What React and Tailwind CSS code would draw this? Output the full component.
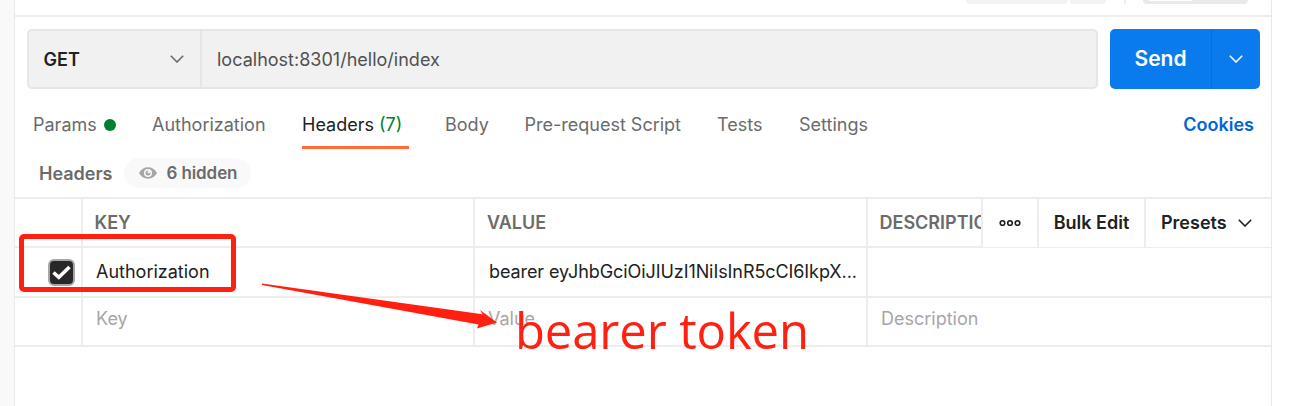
import React from "react";

const tabs = [
  { name: "Params", dot: true, width: "w-[119px]" },
  { name: "Authorization", width: "w-[150px]" },
  { name: "Headers", count: 7, active: true, width: "w-[143px]" },
  { name: "Body", width: "w-[79.5px]" },
  { name: "Pre-request Script", width: "w-[192.5px]" },
  { name: "Tests", width: "w-[82px]" },
  { name: "Settings", width: "w-[90px]" },
];

const Chevron = ({ className }) => (
  <svg className={className} width="14" height="8" viewBox="0 0 14 8" fill="none" stroke="currentColor" strokeWidth="1.6">
    <path d="M0.8 0.8 L7 7 L13.2 0.8" />
  </svg>
);

const Eye = () => (
  <svg width="18" height="12" viewBox="0 0 18 12">
    <path d="M0 6C2 2.200 5.200 0.300 9 0.300S16 2.200 18 6c-2 3.800-5.200 5.700-9 5.700S2 9.800 0 6z" fill="#a6a6a6" />
    <circle cx="9" cy="6" r="4" fill="#f9f9f9" />
    <circle cx="9" cy="6" r="2.500" fill="#a6a6a6" />
    <circle cx="9.900" cy="5" r="1.300" fill="#f9f9f9" />
  </svg>
);

const TopBar = () => (
  <div className="h-[17px] border-b-2 border-[#ededed] flex items-start">
    <div className="ml-[951px] w-[102px] h-1 rounded-b-[5px] bg-[#f2f2f2]" />
    <div className="ml-0.5 w-9 h-1 rounded-br-[5px] bg-[#f2f2f2]" />
    <div className="ml-[18px] w-0.5 h-1 bg-[#ededed]" />
    <div className="ml-[17px] w-[105px] h-1 rounded-b-[5px] bg-[#e9e9e9] pl-1.5">
      <div className="w-[43px] h-px bg-white" />
    </div>
  </div>
);

const RequestBar = () => (
  <div className="flex mt-3 ml-3 h-[60px]">
    <div className="flex w-[1071px] border-2 border-[#e6e6e6] rounded-[5px] bg-[#f1f1f1] text-lg">
      <div className="flex items-center justify-between w-[173px] border-r-2 border-[#e6e6e6] pl-[14.5px] pr-4 font-semibold text-[#212121]">
        <span className="pt-0.5">GET</span>
        <Chevron className="text-[#6b6b6b]" />
      </div>
      <div className="flex items-center pl-[15px] pt-0.5 tracking-[0.01px] text-[#505050]">localhost:8301/hello/index</div>
    </div>
    <div className="flex ml-3 w-[150px] rounded-[5px] bg-[#097bed] text-white">
      <div className="flex items-center justify-center w-[102px] border-r border-[#086fd6] text-[21px] font-semibold">
        Send
      </div>
      <div className="flex flex-1 items-center justify-center">
        <Chevron />
      </div>
    </div>
  </div>
);

const TabBar = () => (
  <div className="flex h-[60px] pl-[18px] pr-[17px] text-lg leading-[71px] text-[#6b6b6b] whitespace-nowrap">
    {tabs.map(tab => (
      <div key={tab.name} className={tab.width}>
        {tab.active ? (
          <div className="w-[107px] h-[60px] border-b-[3px] border-[#ff6c37] text-[#212121]">
            {tab.name} <span className="text-[#007f31]">({tab.count})</span>
          </div>
        ) : (
          <div className="flex items-center h-[71px]">
            {tab.name}
            {tab.dot && <span className="ml-[7px] mt-px w-3 h-3 rounded-full bg-[#007f31]" />}
          </div>
        )}
      </div>
    ))}
    <div className="ml-auto font-semibold text-[#0265d2]">Cookies</div>
  </div>
);

const HeadersTitle = () => (
  <div className="flex items-center h-12 pl-6 text-lg font-semibold text-[#6b6b6b]">
    <span className="w-[85px] pt-0.5">Headers</span>
    <div className="flex items-center w-[127px] h-[30px] pl-[15px] rounded-full bg-[#f9f9f9] text-[17px] tracking-[-0.1px]">
      <Eye />
      <span className="ml-[9.5px]">6 hidden</span>
    </div>
  </div>
);

const HeaderTable = () => (
  <div className="border-t-2 border-[#ededed] text-lg text-[#212121] whitespace-nowrap">
    <div className="flex h-[49px] leading-[47px] font-semibold">
      <div className="w-[68px] border-r-2 border-b-2 border-[#ededed]" />
      <div className="w-[392px] border-r-2 border-b-2 border-[#ededed] pl-[11.5px] text-[#6b6b6b]">KEY</div>
      <div className="w-[393px] border-r-2 border-b-2 border-[#ededed] pl-3 text-[#6b6b6b]">VALUE</div>
      <div className="w-[115px] border-r-2 border-b-2 border-[#ededed] pl-[11.5px] overflow-hidden text-[#6b6b6b]">DESCRIPTION</div>
      <div className="flex items-center justify-center w-14 border-r-2 border-b border-[#ededed]">
        <svg width="22" height="8" viewBox="0 0 22 8" fill="none" stroke="#212121" strokeWidth="1.6">
          <circle cx="3.500" cy="4" r="2.300" />
          <circle cx="11" cy="4" r="2.300" />
          <circle cx="18.500" cy="4" r="2.300" />
        </svg>
      </div>
      <div className="w-[107px] border-r-2 border-b border-[#ededed] text-center">Bulk Edit</div>
      <div className="flex flex-1 border-b border-[#ededed] pl-[15px]">
        Presets
        <Chevron className="ml-[11px] mt-5" />
      </div>
    </div>
    <div className="flex h-[50px] leading-[48px] border-b-2 border-[#ededed]">
      <div className="flex items-center w-[68px] border-r-2 border-[#ededed] pl-[33px]">
        <div className="flex items-center justify-center w-[27px] h-[27px] rounded-md border-2 border-[#a6a6a6] bg-[#282828]">
          <svg width="19" height="15" viewBox="0 0 19 15" fill="none" stroke="#fff" strokeWidth="3.600">
            <path d="M1.500 7.500 L6.800 12.300 L17.500 2" />
          </svg>
        </div>
      </div>
      <div className="w-[392px] border-r-2 border-[#ededed] pl-[13px]">Authorization</div>
      <div className="w-[393px] border-r-2 border-[#ededed] pl-[14px] tracking-[-0.08px]">bearer eyJhbGciOiJIUzI1NiIsInR5cCI6IkpX...</div>
    </div>
    <div className="flex h-[49px] leading-[42px] border-b-2 border-[#ededed] text-[#a6a6a6]">
      <div className="w-[68px] border-r-2 border-[#ededed]" />
      <div className="w-[392px] border-r-2 border-[#ededed] pl-[13px]">Key</div>
      <div className="w-[393px] border-r-2 border-[#ededed] pl-[13px]">Value</div>
      <div className="pl-[13px]">Description</div>
    </div>
  </div>
);

// red marks drawn over the table
const Annotations = () => (
  <>
    <div className="absolute left-[19px] top-[234px] w-[217px] h-[58px] border-[5px] border-[#ff2012] rounded-[5px]" />
    <svg className="absolute left-[260px] top-[280px]" width="240" height="52" viewBox="0 0 240 52" fill="#ff2012">
      <path d="M2 3.500 L2 4.900 L218.500 44.500 L217 48.500 L237 42.500 L220 30 L222.500 34.300 Z" />
    </svg>
    <div className="absolute left-[515px] top-[298px] font-['Open_Sans',sans-serif] text-[49px] leading-[65px] tracking-[-0.12px] text-[#ff2012] whitespace-nowrap">
      bearer token
    </div>
  </>
);

export default function App() {
  return (
    <div className="relative flex w-[1311px] h-[406px] overflow-hidden bg-white font-['Inter',sans-serif]">
      <div className="w-[14px] bg-[#f9f9f9]" />
      <div className="w-[1258px] border-x border-[#e9e9e9]">
        <TopBar />
        <RequestBar />
        <TabBar />
        <HeadersTitle />
        <HeaderTable />
      </div>
      <Annotations />
    </div>
  );
}
